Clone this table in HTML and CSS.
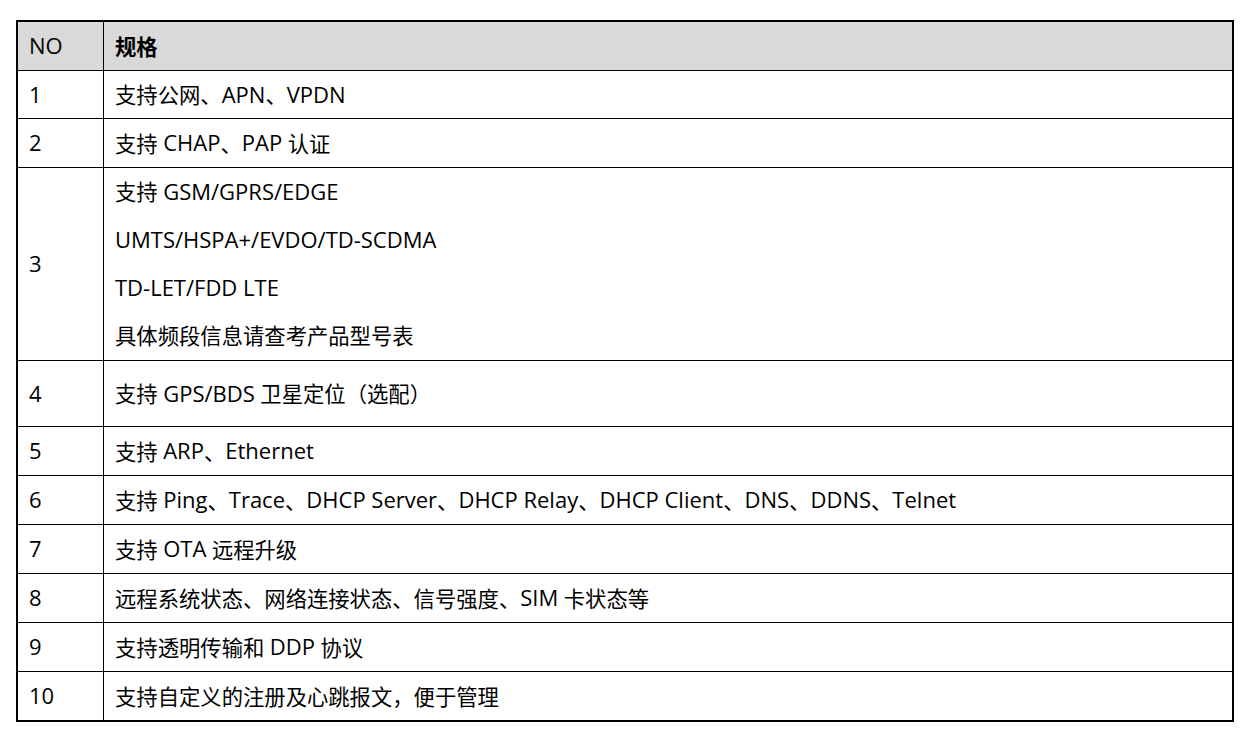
FILE: index.html
```html
<!DOCTYPE html>
<html lang="zh-CN">
<head>
<meta charset="utf-8">
<title>规格</title>
<link rel="stylesheet" href="styles.css">
</head>
<body>
<div class="spec-table">
  <div class="cell no head"><span class="en">NO</span></div>
  <div class="cell spec head bold">规格</div>

  <div class="cell no"><span class="en">1</span></div>
  <div class="cell spec">支持公网、<span class="en">APN</span>、<span class="en">VPDN</span></div>

  <div class="cell no"><span class="en">2</span></div>
  <div class="cell spec">支持 <span class="en">CHAP</span>、<span class="en">PAP</span> 认证</div>

  <div class="cell no"><span class="en">3</span></div>
  <div class="cell spec multi">
    <div class="line">支持 <span class="en">GSM/GPRS/EDGE</span></div>
    <div class="line"><span class="en">UMTS/HSPA+/EVDO/TD-SCDMA</span></div>
    <div class="line"><span class="en">TD-LET/FDD LTE</span></div>
    <div class="line">具体频段信息请查考产品型号表</div>
  </div>

  <div class="cell no"><span class="en">4</span></div>
  <div class="cell spec">支持 <span class="en">GPS/BDS</span> 卫星定位（选配）</div>

  <div class="cell no"><span class="en">5</span></div>
  <div class="cell spec">支持 <span class="en">ARP</span>、<span class="en">Ethernet</span></div>

  <div class="cell no"><span class="en">6</span></div>
  <div class="cell spec">支持 <span class="en">Ping</span>、<span class="en">Trace</span>、<span class="en">DHCP Server</span>、<span class="en">DHCP Relay</span>、<span class="en">DHCP Client</span>、<span class="en">DNS</span>、<span class="en">DDNS</span>、<span class="en">Telnet</span></div>

  <div class="cell no"><span class="en">7</span></div>
  <div class="cell spec">支持 <span class="en">OTA</span> 远程升级</div>

  <div class="cell no"><span class="en">8</span></div>
  <div class="cell spec">远程系统状态、网络连接状态、信号强度、<span class="en">SIM</span> 卡状态等</div>

  <div class="cell no"><span class="en">9</span></div>
  <div class="cell spec">支持透明传输和 <span class="en">DDP</span> 协议</div>

  <div class="cell no last"><span class="en">10</span></div>
  <div class="cell spec last">支持自定义的注册及心跳报文，便于管理</div>
</div>
</body>
</html>
```

FILE: styles.css
```css
html, body {
  margin: 0;
  padding: 0;
  background: #ffffff;
}

body {
  padding: 20px 0 0 16px;
  font-family: "Open Sans", "Noto Sans CJK SC", sans-serif;
  font-size: 21.33px;
  color: #000000;
}

.en {
  font-size: 22px;
}

.spec-table {
  box-sizing: border-box;
  width: 1218px;
  border: 2px solid #000000;
  display: grid;
  grid-template-columns: 86px 1fr;
  grid-template-rows: 49px 48px 49px 193px 66px repeat(5, 49px) 48px;
}

.cell {
  box-sizing: border-box;
  display: flex;
  align-items: center;
  padding: 0 10px 2px 11px;
  border-bottom: 1px solid #000000;
  white-space: pre;
}

.cell.last {
  border-bottom: none;
}

.no {
  border-right: 1px solid #000000;
}

.head {
  background: #d9d9d9;
}

.bold {
  font-weight: 700;
}

.multi {
  flex-direction: column;
  align-items: stretch;
  justify-content: flex-start;
  padding-bottom: 0;
  white-space: normal;
}

.line {
  height: 48px;
  display: flex;
  align-items: center;
  padding-bottom: 3px;
  box-sizing: border-box;
  white-space: pre;
}
```
